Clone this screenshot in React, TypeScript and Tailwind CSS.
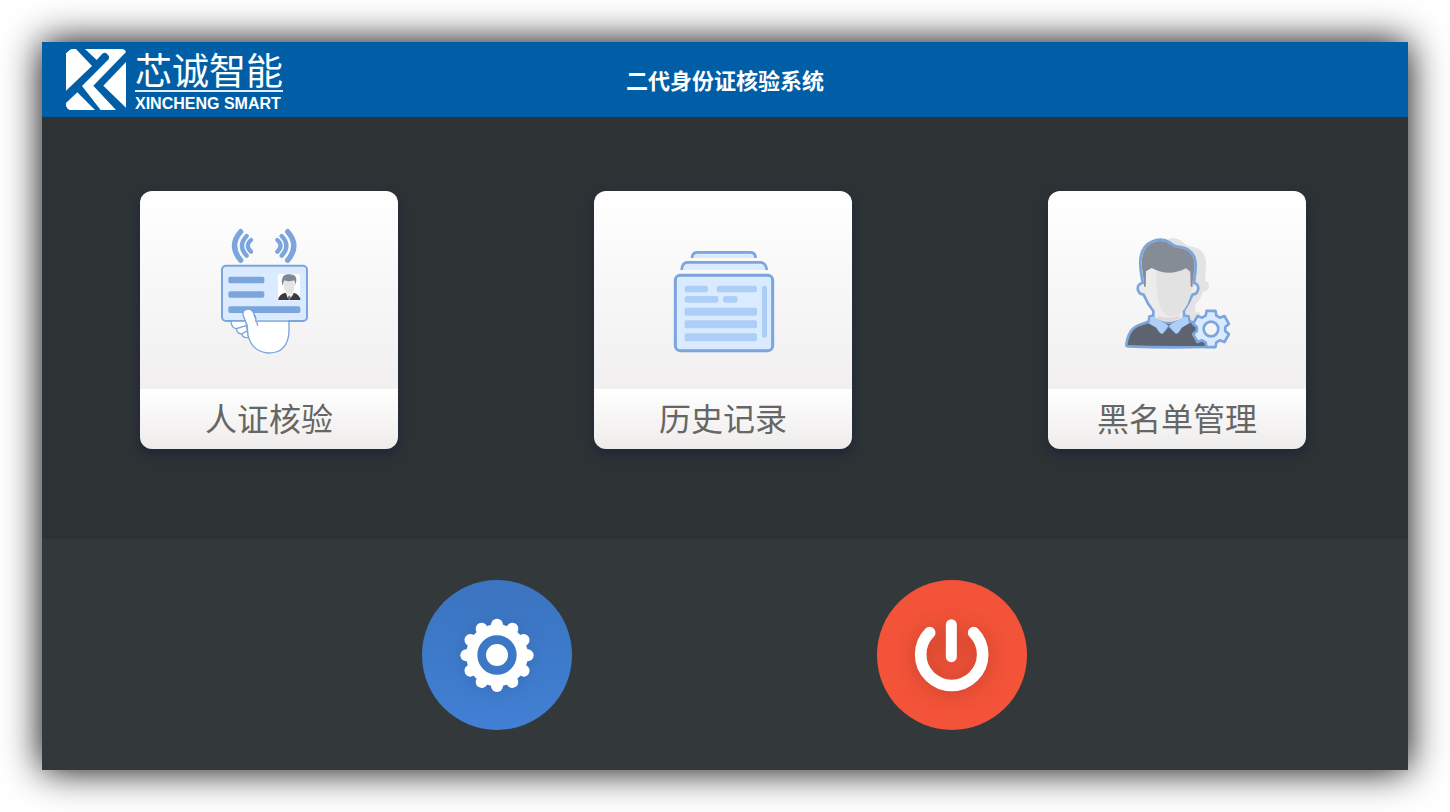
import type { ReactNode } from "react";

const polar = (cx: number, cy: number, r: number, deg: number) => {
  const a = (deg * Math.PI) / 180;
  return `${(cx + r * Math.cos(a)).toFixed(1)},${(cy + r * Math.sin(a)).toFixed(1)}`;
};

const smallGearPoints = [0, 1, 2, 3, 4, 5]
  .flatMap((i) => {
    const a = -90 + i * 60;
    return [
      polar(303, 312, 43, a - 22),
      polar(303, 312, 56, a - 14),
      polar(303, 312, 56, a + 14),
      polar(303, 312, 43, a + 22),
    ];
  })
  .join(" ");

function LogoMark() {
  return (
    <svg viewBox="198 147 180 183" className="h-[61px] w-[60px]" fill="#fff" aria-hidden="true">
      <path d="M198 160 L210 149 Q213 147 218 147 H228 L276 198 L198 272 Z" />
      <path d="M255 147 H368 Q376 148 378 156 L280 257 L348 330 H302 L246 258 L326 178 Q330 172 325 166 L318 159 Q313 156 307 161 L290 180 Z" />
      <path d="M378 186 V323 L310 257 Z" />
      <path d="M232 277 L285 330 H212 Q206 330 203 326 L198 318 V309 Z" />
    </svg>
  );
}

function IdCardIcon() {
  return (
    <svg viewBox="12 0 360 450" className="h-[150px] w-[120px]" aria-hidden="true">
      <g fill="none" stroke="#7ba5dc" strokeLinecap="round">
        <path d="M107 50 Q70 92 107 136" strokeWidth="16" />
        <path d="M125 63 Q97 92 125 122" strokeWidth="13" />
        <path d="M138 75 Q119 92 138 110" strokeWidth="13" />
        <path d="M248 50 Q285 92 248 136" strokeWidth="16" />
        <path d="M230 63 Q258 92 230 122" strokeWidth="13" />
        <path d="M217 75 Q236 92 217 110" strokeWidth="13" />
      </g>
      <rect x="51" y="152" width="255" height="166" rx="12" fill="#dbebff" stroke="#7ba5dc" strokeWidth="6" />
      <g fill="#7ba5dc">
        <rect x="70" y="185" width="108" height="20" rx="5" />
        <rect x="70" y="229" width="108" height="19" rx="5" />
        <rect x="70" y="274" width="216" height="20" rx="5" />
      </g>
      <rect x="219" y="177" width="66" height="79" rx="5" fill="#fff" />
      <path d="M236 204 Q236 183 253 184 Q271 184 269 206 Q270 235 253 237 Q236 235 236 204 Z" fill="#e4e4e4" />
      <path d="M232 210 Q225 181 247 178 Q276 175 274 197 L271 211 Q271 199 267 196 Q251 202 239 196 Q234 200 234 210 Z" fill="#7f8892" />
      <path d="M220 255 Q220 238 242 233 L253 247 L265 233 Q285 238 286 255 Z" fill="#3b3b3e" />
      <path d="M242 231 L253 240 L265 231 V238 L257 249 L253 243 L248 249 Z" fill="#f2f2f2" />
      <path d="M253 241 L257 246 L255 255 H251 L249 246 Z" fill="#77777a" />
      <g fill="#fff" stroke="#7ba5dc" strokeWidth="4" strokeLinejoin="round" strokeLinecap="round">
        <path d="M78 318 Q79 342 98 341 L124 333 V318 Z" />
        <path d="M94 341 Q96 357 111 357 L128 348 L124 332 Z" />
        <path d="M110 357 Q114 371 131 367 L128 347 Z" />
        <path d="M252 318 V350 Q248 414 190 414 Q142 411 129 361 L126 329 L115 303 Q110 285 128 282 Q142 282 146 295 L154 318 Z" />
        <path d="M150 302 L158 331" fill="none" />
      </g>
      <path d="M151 314 H249 V322 H156 Z" fill="#fff" />
      <path d="M150 318 H252" stroke="#7ba5dc" strokeWidth="5" />
    </svg>
  );
}

function HistoryIcon() {
  return (
    <svg viewBox="-6 -30 390 390" className="size-[130px]" aria-hidden="true">
      <g fill="#dbebff" stroke="#7ba5dc" strokeWidth="8">
        <path d="M96 69 Q97 52 112 52 H271 Q286 52 287 69" />
        <path d="M65 105 Q66 82 83 82 H300 Q318 82 320 105" />
        <rect x="46" y="121" width="292" height="226" rx="14" strokeWidth="9" />
      </g>
      <g fill="#adcef6">
        <rect x="74" y="152" width="70" height="20" rx="7" />
        <rect x="170" y="152" width="121" height="20" rx="7" />
        <rect x="74" y="183" width="101" height="20" rx="7" />
        <rect x="189" y="183" width="44" height="20" rx="8" />
        <rect x="74" y="218" width="217" height="24" rx="5" />
        <rect x="74" y="256" width="217" height="24" rx="5" />
        <rect x="74" y="295" width="217" height="24" rx="5" />
        <rect x="306" y="152" width="15" height="156" rx="6" />
      </g>
    </svg>
  );
}

function BlacklistIcon() {
  return (
    <svg viewBox="-3 -9 408 408" className="size-[136px]" aria-hidden="true">
      <path
        d="M172 44 Q200 32 222 55 Q230 64 250 66 Q292 76 288 126 L285 168 Q298 170 297 185 Q296 198 280 200 Q272 222 256 240 V262 H270 V300 H180 Z"
        fill="#e3e3e3"
      />
      <path d="M49 360 Q54 312 88 300 L124 287 H232 Q275 298 292 326 L288 366 Q160 369 55 364 Q48 364 49 360 Z" fill="#5d6470" stroke="#7ba5dc" strokeWidth="8" />
      <path
        d="M98 174 Q84 176 83 190 Q84 206 101 209 Q112 236 130 258 V280 Q150 294 176 294 Q202 294 222 280 V256 Q238 232 247 209 Q264 206 265 190 Q264 176 252 174 L257 130 Q260 75 214 66 Q194 66 180 53 Q155 36 125 50 Q84 68 92 135 Z"
        fill="#ececec"
        stroke="#7ba5dc"
        strokeWidth="8"
        strokeLinejoin="round"
      />
      <path d="M141 130 H227 L245 140 V190 Q238 245 212 264 Q194 276 176 274 Q140 258 139 170 Z" fill="#e2e2e2" />
      <path d="M144 273 Q176 284 208 272 V280 Q176 299 144 282 Z" fill="#e0d9da" />
      <path
        d="M102 185 V170 L96 130 Q90 72 126 54 Q155 41 180 58 Q194 70 214 70 Q257 80 253 130 L248 170 V185 H242 L241 140 L228 130 Q176 157 125 129 L108 139 L107 185 Z"
        fill="#858c96"
      />
      <path d="M117 273 L128 272 L176 302 L158 326 Q148 326 139 308 L114 294 Z" fill="#adcef6" />
      <path d="M237 273 L225 272 L176 302 L198 326 Q206 326 215 308 L239 294 Z" fill="#adcef6" />
      <path d="M128 272 L118 274 L115 292 M225 272 L236 274 L239 290" fill="none" stroke="#7ba5dc" strokeWidth="7" strokeLinecap="round" />
      <path d="M158 326 L176 305 L197 326" fill="none" stroke="#7ba5dc" strokeWidth="3" />
      <polygon points={smallGearPoints} fill="#dbebff" stroke="#7ba5dc" strokeWidth="8" strokeLinejoin="round" />
      <circle cx="303" cy="312" r="22" fill="#f5f4f5" stroke="#7ba5dc" strokeWidth="8" />
    </svg>
  );
}

function SettingsIcon() {
  return (
    <svg viewBox="37 30 450 450" className="size-full drop-shadow-[0_2px_8px_rgba(0,0,0,0.1)]" aria-hidden="true">
      <g fill="#fff">
        {[0, 1, 2, 3, 4, 5, 6, 7, 8, 9, 10, 11].map((i) => (
          <circle key={i} cx="262" cy="164" r="18" transform={`rotate(${i * 30} 262 256)`} />
        ))}
        <circle cx="262" cy="256" r="93" />
      </g>
      <circle cx="262" cy="255" r="46" fill="none" stroke="#3d78c6" strokeWidth="26" />
    </svg>
  );
}

function PowerIcon() {
  return (
    <svg
      viewBox="37 30 450 450"
      className="size-full drop-shadow-[0_2px_10px_rgba(0,0,0,0.2)]"
      fill="none"
      stroke="#fff"
      strokeLinecap="round"
      aria-hidden="true"
    >
      <path d="M195 188 A93 93 0 1 0 327 188" strokeWidth="35" />
      <path d="M260 164 V260" strokeWidth="33" />
    </svg>
  );
}

function MenuCard({ label, children }: { label: string; children: ReactNode }) {
  return (
    <button
      type="button"
      className="flex w-[258px] flex-col overflow-hidden rounded-xl shadow-[0_5px_10px_#1f2638]"
    >
      <span className="flex h-[198px] w-full items-center justify-center bg-linear-to-b from-white to-[#f1eff0]">
        {children}
      </span>
      <span className="flex h-[60px] w-full items-center justify-center bg-linear-to-b from-white to-[#eeeceb] pb-1 text-[32px] leading-[56px] text-[#666]">
        {label}
      </span>
    </button>
  );
}

export default function App() {
  return (
    <div className="flex min-h-screen bg-white p-[42px] font-['Noto_Sans_CJK_SC',sans-serif]">
      <div className="flex flex-1 flex-col bg-[#2d3235] shadow-[0_0_36px_#000]">
        <header className="grid h-[75px] grid-cols-[1fr_auto_1fr] items-center bg-[#005ea6] px-6 text-white">
          <div className="flex items-center gap-[9px]">
            <LogoMark />
            <div className="flex flex-col">
              <span className="border-b-2 border-white/90 text-[37px] leading-[42px] font-normal">芯诚智能</span>
              <span className="pt-1 font-['Liberation_Sans',sans-serif] text-base leading-4 font-bold">
                XINCHENG SMART
              </span>
            </div>
          </div>
          <h1 className="text-[22px] font-bold">二代身份证核验系统</h1>
        </header>
        <main className="flex flex-1 items-start justify-between gap-6 pt-[74px] pr-[102px] pb-[90px] pl-[98px]">
          <MenuCard label="人证核验">
            <IdCardIcon />
          </MenuCard>
          <MenuCard label="历史记录">
            <HistoryIcon />
          </MenuCard>
          <MenuCard label="黑名单管理">
            <BlacklistIcon />
          </MenuCard>
        </main>
        <footer className="flex h-[231px] items-center justify-center gap-[305px] bg-[#33383b] pr-0.5">
          <button
            type="button"
            aria-label="设置"
            className="size-[150px] rounded-full bg-linear-to-b from-[#3b74c0] to-[#4180d4]"
          >
            <SettingsIcon />
          </button>
          <button type="button" aria-label="退出" className="size-[150px] rounded-full bg-[#f35338]">
            <PowerIcon />
          </button>
        </footer>
      </div>
    </div>
  );
}
